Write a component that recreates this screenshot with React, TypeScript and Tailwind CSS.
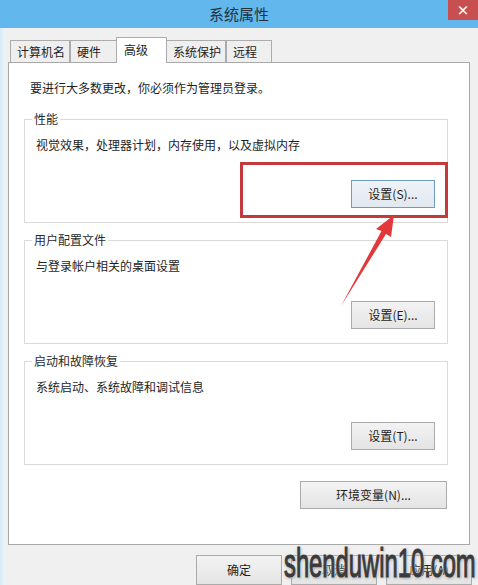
import React from "react";

const font = { fontFamily: '"Noto Sans CJK SC", "Noto Sans", sans-serif' };

function Btn({ label, w, primary }: { label: string; w: string; primary?: boolean }) {
  return (
    <div
      className={
        "flex h-[28px] items-center justify-center border text-[12px] text-[#1e1e1e] " +
        w +
        (primary
          ? " border-[#6f9cc6] bg-gradient-to-b from-[#eef3f8] to-[#e1e8ef]"
          : " border-[#ababab] bg-gradient-to-b from-[#f3f3f3] to-[#e4e4e4]")
      }
    >
      {label}
    </div>
  );
}

function Group({ title, desc, btn, primary }: { title: string; desc: string; btn: string; primary?: boolean }) {
  return (
    <div className="relative flex h-[104px] w-[424px] flex-col border border-[#dadada]">
      <span className="absolute left-[7px] top-[-9px] bg-white px-[2px] text-[12px] leading-[16px] text-[#2a2a2a]">
        {title}
      </span>
      <div className="ml-[11px] mt-[17px] h-[16px] text-[12px] leading-[16px] text-[#1e1e1e]">{desc}</div>
      <div className="mr-[12px] mt-[27px] flex justify-end">
        <Btn label={btn} w="w-[84px]" primary={primary} />
      </div>
    </div>
  );
}

function Tab({ label, w, active }: { label: string; w: string; active?: boolean }) {
  return active ? (
    <div
      className={
        "relative z-10 -mb-px -mx-px flex h-[26px] items-start border border-b-0 border-[#acacac] bg-white pl-[7px] pt-[3px] text-[12px] text-[#1e1e1e] " +
        w
      }
    >
      {label}
    </div>
  ) : (
    <div
      className={
        "flex h-[22px] items-center border border-b-0 border-[#acacac] bg-[#efefef] pl-[6px] text-[12px] text-[#1e1e1e] " +
        w
      }
    >
      {label}
    </div>
  );
}

export default function App() {
  return (
    <div className="relative h-[585px] w-[478px] overflow-hidden bg-[#f0f0f0]" style={font}>
      {/* title bar */}
      <div className="relative flex h-[28px] items-center justify-center bg-[#62b8ec] text-[15px] text-[#23323f]">
        系统属性
        <div className="absolute right-0 top-0 flex h-[20px] w-[30px] items-center justify-center bg-[#c84f50] text-[13px] font-bold text-white">
          ×
        </div>
      </div>

      <div className="flex h-[557px]">
        <div className="w-[5px] bg-gradient-to-r from-[#d6ebf8] to-[#eef3f7]" />
        <div className="flex flex-col pl-[3px]">
          {/* tabs */}
          <div className="ml-[2px] mt-[12px] flex h-[22px] items-end">
            <Tab label="计算机名" w="w-[60px]" />
            <Tab label="硬件" w="w-[47px]" />
            <Tab label="高级" w="w-[51px]" active />
            <Tab label="系统保护" w="w-[60px]" />
            <Tab label="远程" w="w-[46px]" />
          </div>
          {/* panel */}
          <div className="flex h-[485px] w-[462px] flex-col border border-[#a9a9a9] bg-white">
            <div className="ml-[21px] mt-[17px] h-[16px] text-[12px] leading-[16px] text-[#1e1e1e]">
              要进行大多数更改，你必须作为管理员登录。
            </div>
            <div className="ml-[15px] mt-[23px] flex flex-col gap-[17px]">
              <Group title="性能" desc="视觉效果，处理器计划，内存使用，以及虚拟内存" btn="设置(S)..." primary />
              <Group title="用户配置文件" desc="与登录帐户相关的桌面设置" btn="设置(E)..." />
              <Group title="启动和故障恢复" desc="系统启动、系统故障和调试信息" btn="设置(T)..." />
            </div>
            <div className="mr-[22px] mt-[16px] flex justify-end">
              <Btn label="环境变量(N)..." w="w-[147px]" />
            </div>
          </div>
          {/* bottom buttons */}
          <div className="ml-[188px] mt-[10px] flex gap-[9px]">
            <Btn label="确定" w="w-[86px] h-[30px]" />
            <Btn label="取消" w="w-[86px] h-[30px]" />
            <Btn label="应用(A)" w="w-[86px] h-[30px]" />
          </div>
        </div>
      </div>

      {/* red annotation box */}
      <div className="pointer-events-none absolute left-[240px] top-[162px] h-[56px] w-[208px] border-[3px] border-[#c23a3c]" />
      {/* red arrow */}
      <svg className="pointer-events-none absolute left-0 top-0" width="478" height="585">
        <polygon points="394,215 391,237 386,234 341,306 381.5,231 376,229" fill="#e2383a" />
      </svg>

      {/* watermark */}
      <div
        className="pointer-events-none absolute left-[284px] top-[541px] origin-left scale-x-[0.58] whitespace-nowrap text-[41px] leading-[44px] text-[#3a3a3a] [-webkit-text-stroke:1.2px_#3a3a3a] [text-shadow:0_0_2px_#fff,0_0_3px_#fff,1px_1px_4px_#777]"
        style={{ fontFamily: '"Liberation Sans", Arial, sans-serif' }}
      >
        shenduwin10.com
      </div>
    </div>
  );
}
